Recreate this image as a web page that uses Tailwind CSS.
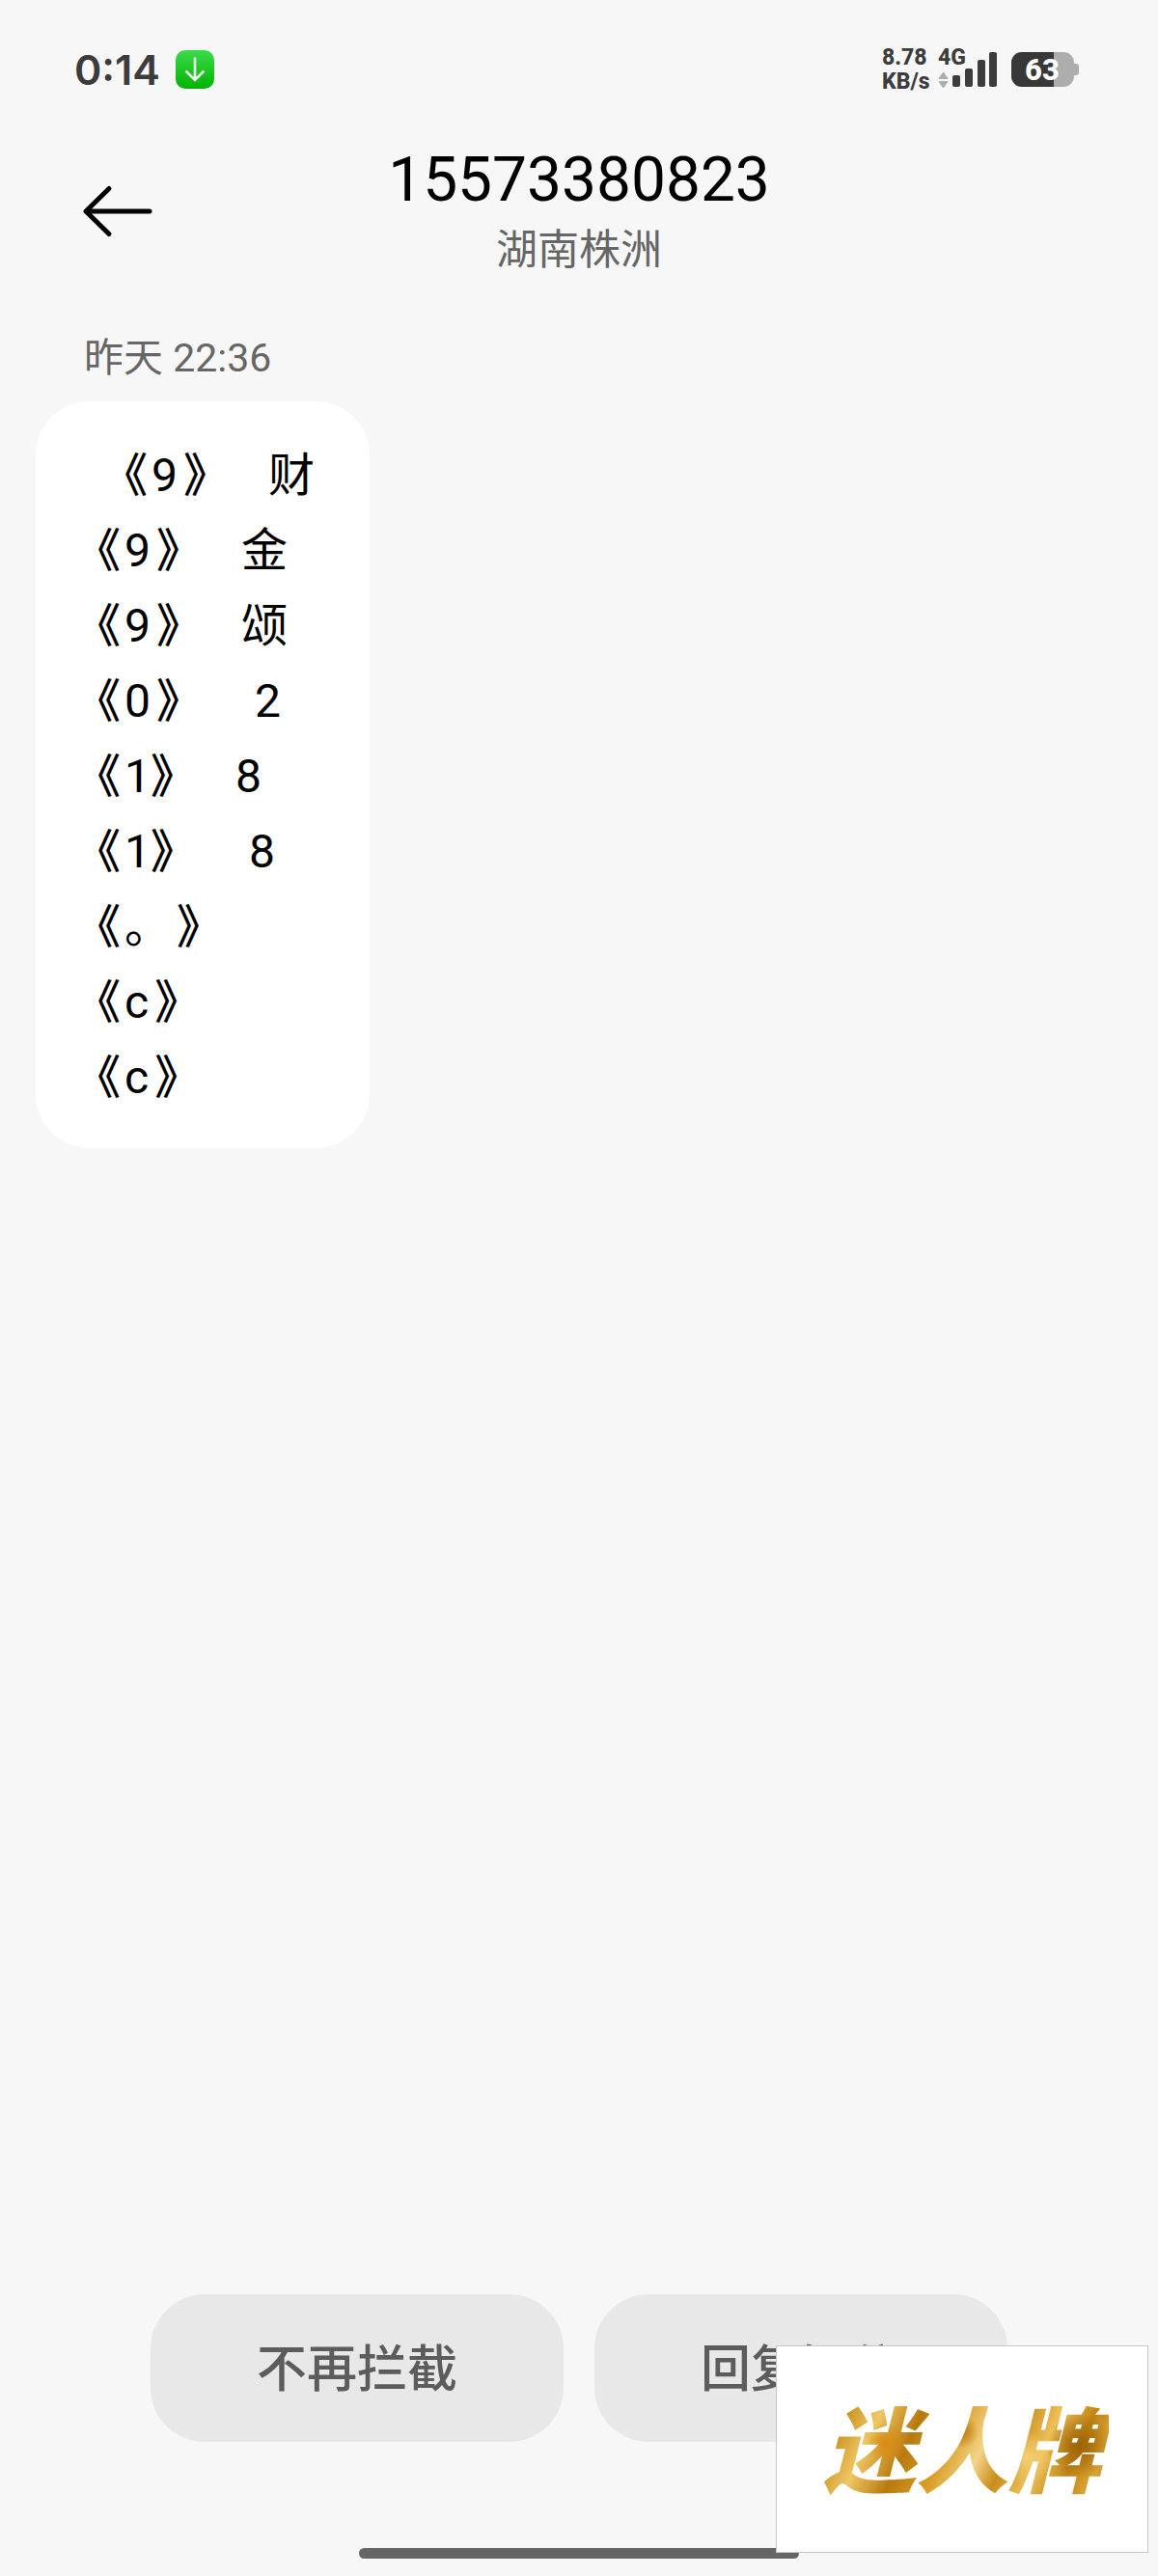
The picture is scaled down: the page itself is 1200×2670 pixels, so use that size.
<!DOCTYPE html>
<html lang="zh-CN">
<head>
    <meta charset="UTF-8" />
    <meta name="viewport" content="width=device-width, initial-scale=1" />
    <title>15573380823</title>
    <script src="https://cdn.jsdelivr.net/npm/@tailwindcss/browser@4"></script>
</head>
<body class="relative min-h-screen flex flex-col bg-[#f7f7f7] text-black font-[Roboto,'Noto_Sans_CJK_SC',sans-serif]">
    <!-- Status bar -->
    <div class="h-36 pl-[77px] pr-[82px] flex items-center justify-between text-[#3c3c3c]">
        <div class="flex items-center gap-4">
            <span class="text-[43px] leading-none font-semibold font-[Inter,sans-serif]">0:14</span>
            <svg class="size-10" viewBox="0 0 40 40" fill="none">
                <defs>
                    <linearGradient id="green" x1="0" y1="0" x2="0" y2="1">
                        <stop offset="0" stop-color="#3bdc4a" />
                        <stop offset="1" stop-color="#04b304" />
                    </linearGradient>
                </defs>
                <rect width="40" height="40" rx="10" fill="url(#green)" />
                <path d="M20 7.5V31M10.500 21.500L20 31L29.500 21.500" stroke="#effdef" stroke-width="2.600" />
            </svg>
        </div>
        <div class="flex items-center">
            <div class="w-[58px] text-[23px] leading-[25px] font-extrabold">
                <p>8.78</p>
                <p>KB/s</p>
            </div>
            <div class="relative w-[62px] h-[50px]">
                <span class="absolute left-0 top-0 text-[23px] leading-[25px] font-extrabold">4G</span>
                <svg class="w-[62px] h-[50px]" viewBox="2 0 62 50" fill="currentColor">
                    <path d="M3 34.500L7.500 28L12 34.500ZM3 37.500L7.500 44L12 37.500Z" fill="#adadad" stroke="#adadad" stroke-linejoin="round" />
                    <rect x="17" y="31" width="8" height="12" rx="2" />
                    <rect x="30" y="24" width="8" height="19" rx="2" />
                    <rect x="43" y="15" width="8" height="28" rx="2" />
                    <rect x="55" y="7" width="8" height="36" rx="2" />
                </svg>
            </div>
            <div class="relative ml-3.5 w-[70px] h-9 flex items-center">
                <svg class="absolute inset-0" width="70" height="36" viewBox="0 0 70 36">
                    <clipPath id="cell"><rect width="65" height="36" rx="11" /></clipPath>
                    <g clip-path="url(#cell)">
                        <rect width="65" height="36" fill="#adadad" />
                        <rect width="44" height="36" fill="#383838" />
                    </g>
                    <path d="M65 12h2q3 0 3 3v6q0 3-3 3h-2z" fill="#adadad" />
                </svg>
                <span class="relative w-16 text-center text-[31px] leading-none font-extrabold text-white">63</span>
            </div>
        </div>
    </div>

    <!-- Header -->
    <header class="grid grid-cols-[1fr_auto_1fr] items-center px-[84px]">
        <button type="button" aria-label="返回" class="w-[76px] h-[60px]">
            <svg class="w-[76px] h-[60px]" viewBox="0 0 76 60" fill="none" stroke="#000" stroke-width="5" stroke-linecap="round" stroke-linejoin="round">
                <path d="M71 31H5M29 7.500L5 31L29 54.500" />
            </svg>
        </button>
        <div class="pt-[3px] text-center">
            <h1 class="text-[64px] leading-20">15573380823</h1>
            <p class="text-[43px] leading-16 text-[#666]">湖南株洲</p>
        </div>
    </header>

    <!-- Messages -->
    <main class="px-[37px] pt-12 flex flex-col items-start">
        <time class="ml-[50px] mb-[13px] text-[41px] leading-16 text-[#666]">昨天 22:36</time>
        <div class="w-[346px] pt-[38px] pb-[34px] pl-16 rounded-[56px] bg-white text-[48px] leading-[78px] whitespace-nowrap">
            <p class="pl-7"><span class="inline-block w-7 font-medium [font-feature-settings:'halt']">《</span>9<span class="inline-block w-[38px] pl-1.5 font-medium [font-feature-settings:'halt']">》</span><span class="ml-14">财</span></p>
            <p><span class="inline-block w-7 font-medium [font-feature-settings:'halt']">《</span>9<span class="inline-block w-[38px] pl-1.5 font-medium [font-feature-settings:'halt']">》</span><span class="ml-14">金</span></p>
            <p><span class="inline-block w-7 font-medium [font-feature-settings:'halt']">《</span>9<span class="inline-block w-[38px] pl-1.5 font-medium [font-feature-settings:'halt']">》</span><span class="ml-14">颂</span></p>
            <p><span class="inline-block w-7 font-medium [font-feature-settings:'halt']">《</span>0<span class="inline-block w-[38px] pl-1.5 font-medium [font-feature-settings:'halt']">》</span><span class="ml-[70px]">2</span></p>
            <p><span class="inline-block w-7 font-medium [font-feature-settings:'halt']">《</span>1<span class="inline-block w-8 font-medium [font-feature-settings:'halt']">》</span><span class="ml-14">8</span></p>
            <p><span class="inline-block w-7 font-medium [font-feature-settings:'halt']">《</span>1<span class="inline-block w-8 font-medium [font-feature-settings:'halt']">》</span><span class="ml-[70px]">8</span></p>
            <p><span class="inline-block w-7 font-medium [font-feature-settings:'halt']">《</span>。<span class="inline-block w-[38px] pl-1.5 font-medium [font-feature-settings:'halt']">》</span></p>
            <p><span class="inline-block w-7 font-medium [font-feature-settings:'halt']">《</span>c<span class="inline-block w-[38px] pl-1.5 font-medium [font-feature-settings:'halt']">》</span></p>
            <p><span class="inline-block w-7 font-medium [font-feature-settings:'halt']">《</span>c<span class="inline-block w-[38px] pl-1.5 font-medium [font-feature-settings:'halt']">》</span></p>
        </div>
    </main>

    <!-- Actions -->
    <footer class="mt-auto px-[156px] pb-[18px]">
        <div class="grid grid-cols-2 gap-8 text-[52px] font-medium text-[#5c5c5c]">
            <button type="button" class="h-[153px] pt-1 rounded-[56px] bg-[#e8e8e8]">不再拦截</button>
            <button type="button" class="h-[153px] pt-1 rounded-[56px] bg-[#e8e8e8]">回复短信</button>
        </div>
        <div class="mt-[110px] mx-auto w-[456px] h-[11px] rounded-full bg-[#666]"></div>
    </footer>

    <!-- Brand badge -->
    <div class="absolute right-2.5 bottom-6 w-[386px] h-[215px] pb-2 flex items-center justify-center border border-[#c6c6c6] bg-white">
        <span class="px-2 text-[96px] leading-[120px] font-black italic font-['Noto_Sans_CJK_SC',sans-serif] text-transparent bg-clip-text bg-[radial-gradient(circle_at_24%_48%,#d98a10_0,transparent_9%),radial-gradient(circle_at_50%_38%,#b9790f_0,transparent_10%),radial-gradient(circle_at_90%_50%,#9c6206_0,transparent_12%),radial-gradient(circle_at_72%_60%,#f3cf72_0,transparent_12%),linear-gradient(115deg,#b57b0c_0%,#c8901c_12%,#f0c765_22%,#b87a0e_34%,#d9a02a_46%,#f3d488_56%,#c98d1c_64%,#edc15a_74%,#c08414_84%,#dba638_92%,#a56d0a_100%)]">迷人牌</span>
    </div>
</body>
</html>
